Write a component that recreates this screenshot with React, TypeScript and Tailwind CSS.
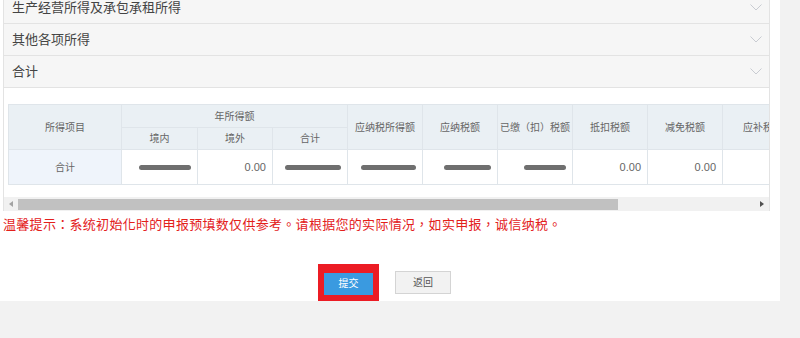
import React from 'react';

const font = { fontFamily: '"Liberation Sans", "Noto Sans CJK SC", sans-serif' };
const fontTc = { fontFamily: '"Liberation Sans", "Noto Sans CJK TC", sans-serif' };

const sections = ['生产经营所得及承包承租所得', '其他各项所得', '合计'];

const Chevron: React.FC = () => (
    <svg width="12" height="7" viewBox="0 0 12 7" className="mr-[7px]">
        <path d="M0.5 0.5 L6 6 L11.5 0.5" fill="none" stroke="#c9ccd2" strokeWidth="1" />
    </svg>
);

// redacted value, drawn as a grey smear like in the picture
const Smear: React.FC<{ w?: number }> = ({ w = 52 }) => (
    <div className="flex justify-end">
        <div className="h-[5px] rounded-full bg-[#6f6f6f] blur-[0.4px]" style={{ width: w }} />
    </div>
);

const th = 'border border-[#dfe5ea] bg-[#eaf0f4] font-normal text-[#666] text-[10px]';
const td = 'border border-[#dfe5ea] text-[#666] text-[11px] text-right pr-[6px]';

const App: React.FC = () => {
    return (
        <div className="h-[338px] overflow-hidden bg-[#f2f2f2]" style={font}>
            <div className="w-[780px] h-[309px] bg-white pl-[3px]">
                <div className="w-[767px] border-x border-[#e3e3e3] -mt-[8px]">
                    {sections.map(s => (
                        <div key={s} className="h-[32px] flex items-center justify-between bg-[#f6f6f6] border-b border-[#e3e3e3] pl-[8px]">
                            <span className="text-[13px] text-[#444]">{s}</span>
                            <Chevron />
                        </div>
                    ))}
                    <div className="pt-[16px] overflow-hidden">
                        <div className="pl-[4px] overflow-hidden">
                            <table className="table-fixed border-collapse w-[880px]">
                                <colgroup>
                                    <col className="w-[113px]" />
                                    <col className="w-[76px]" />
                                    <col className="w-[75px]" />
                                    <col className="w-[75px]" />
                                    <col className="w-[75px]" />
                                    <col className="w-[75px]" />
                                    <col className="w-[75px]" />
                                    <col className="w-[75px]" />
                                    <col className="w-[75px]" />
                                    <col className="w-[75px]" />
                                    <col className="w-[91px]" />
                                </colgroup>
                                <thead>
                                    <tr className="h-[23px]">
                                        <th rowSpan={2} className={th}>所得项目</th>
                                        <th colSpan={3} className={th}>年所得额</th>
                                        <th rowSpan={2} className={th}>应纳税所得额</th>
                                        <th rowSpan={2} className={th}>应纳税额</th>
                                        <th rowSpan={2} className={th} style={fontTc}>已缴（扣）税额</th>
                                        <th rowSpan={2} className={th}>抵扣税额</th>
                                        <th rowSpan={2} className={th}>减免税额</th>
                                        <th rowSpan={2} className={th + ' text-left pl-[20px] whitespace-nowrap'}>应补税额</th>
                                        <th rowSpan={2} className={th}></th>
                                    </tr>
                                    <tr className="h-[22px]">
                                        <th className={th}>境内</th>
                                        <th className={th}>境外</th>
                                        <th className={th}>合计</th>
                                    </tr>
                                </thead>
                                <tbody>
                                    <tr className="h-[35px]">
                                        <td className="border border-[#dfe5ea] bg-[#eff4fb] text-center text-[10px] text-[#666]">合计</td>
                                        <td className={td}><Smear /></td>
                                        <td className={td}>0.00</td>
                                        <td className={td}><Smear w={56} /></td>
                                        <td className={td}><Smear w={55} /></td>
                                        <td className={td}><Smear w={47} /></td>
                                        <td className={td}><Smear w={42} /></td>
                                        <td className={td}>0.00</td>
                                        <td className={td}>0.00</td>
                                        <td className={td}></td>
                                        <td className={td}></td>
                                    </tr>
                                </tbody>
                            </table>
                        </div>
                        {/* horizontal scrollbar */}
                        <div className="mt-[12px] h-[14px] bg-[#f1f1f1] flex items-center">
                            <div className="w-[14px] flex justify-center">
                                <svg width="4" height="6" viewBox="0 0 4 6"><path d="M4 0 L0 3 L4 6 Z" fill="#a3a3a3" /></svg>
                            </div>
                            <div className="h-[11px] w-[600px] bg-[#c1c1c1]" />
                            <div className="flex-1" />
                            <div className="w-[14px] flex justify-center">
                                <svg width="4" height="6" viewBox="0 0 4 6"><path d="M0 0 L4 3 L0 6 Z" fill="#505050" /></svg>
                            </div>
                        </div>
                    </div>
                </div>
                <p className="mt-[5px] text-[13px] leading-[18px] tracking-[0.3px] text-[#e3201b]" style={fontTc}>
                    温馨提示：系统初始化时的申报预填数仅供参考。请根据您的实际情况，如实申报，诚信纳税。
                </p>
                <div className="mt-[30px] pl-[315px] flex items-center gap-[16px]">
                    <div className="border-[6px] border-[#ec1c24] bg-[#ec1c24]">
                        <button className="w-[49px] h-[22px] bg-[#3a9ae0] text-white text-[10px]">提交</button>
                    </div>
                    <button className="w-[56px] h-[23px] bg-[#f2f2f2] border border-[#d4d4d4] text-[#555] text-[10px]">返回</button>
                </div>
            </div>
        </div>
    );
};

export default App;
